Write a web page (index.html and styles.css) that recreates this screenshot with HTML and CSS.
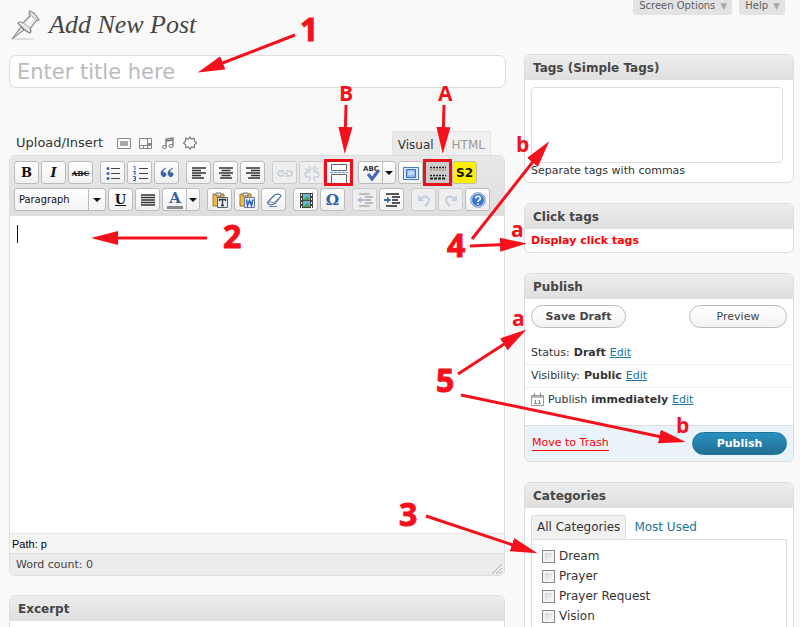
FILE: index.html
```html
<!DOCTYPE html>
<html lang="en">
<head>
<meta charset="utf-8">
<title>Add New Post</title>
<link rel="stylesheet" href="styles.css">
</head>
<body>
<div class="page">
  <header class="top">
    <h1 class="heading">
      <svg class="pin" viewBox="0 0 32 32" aria-hidden="true">
        <ellipse cx="14" cy="30" rx="12" ry="1" fill="#ddd"/>
        <path d="M3 30 12 18l3 3z" fill="#ddd" stroke="#777"/>
        <path d="M21 2q4 1 9 9l-3 1-6 8q2 2 0 4-4-1-12-10 2-2 5 0l7-7q-2-3 0-5z" fill="#eee" stroke="#888" stroke-width="1.2"/>
        <path d="M21 4q2 4 7 7M14 13q2 4 7 6" fill="none" stroke="#aaa"/>
        <path d="m17 14 5-6 2 2-5 6z" fill="#fff"/>
      </svg>
      Add New Post
    </h1>
    <nav class="screen-tabs">
      <button type="button">Screen Options <span>▼</span></button>
      <button type="button">Help <span>▼</span></button>
    </nav>
  </header>
  <main class="columns">
    <section class="main-col">
      <input class="title" type="text" placeholder="Enter title here" aria-label="Title">
      <div class="media-row">
        <span class="media-label">Upload/Insert</span>
        <button type="button" class="media" aria-label="Add an image"><svg viewBox="0 0 14 12"><path d="M.5 1.500h13v10H.5z" fill="#fff" stroke="#888"/><path d="M3 4h8v5H3z" fill="#aaa"/></svg></button>
        <button type="button" class="media" aria-label="Add video"><svg viewBox="0 0 14 12"><path d="M.5 1.500h12v10H.5zM.5 8.500h12M4.500 8v3M8.500 2v9" fill="none" stroke="#888"/><path d="M9 6h3v3H9z" fill="#888"/></svg></button>
        <button type="button" class="media" aria-label="Add audio"><svg viewBox="0 0 14 12"><path d="M5 10V2l7-1v8M5 4l7-1" fill="none" stroke="#777" stroke-width="1.300"/><ellipse cx="3.500" cy="10" rx="2" ry="1.500" fill="#fff" stroke="#777"/><ellipse cx="10" cy="9" rx="2" ry="1.500" fill="#fff" stroke="#777"/></svg></button>
        <button type="button" class="media" aria-label="Add media"><svg viewBox="0 0 14 14"><path d="M7 1l1.500 2 2.700-.700.200 2.600L13.500 7l-2.100 1.700-.200 2.800-2.700-.600L7 13l-1.500-2.100-2.700.600-.200-2.800L.5 7l2.100-2.100.200-2.600L5.500 3z" fill="#fff" stroke="#777" stroke-width="1.200"/></svg></button>
        <div class="mode-tabs">
          <button type="button" class="mode on">Visual</button><button type="button" class="mode">HTML</button>
        </div>
      </div>
      <div class="editor">
        <div class="toolbar">
          <div class="tools">
            <div class="group">
              <button type="button" class="tool serif"><b>B</b></button>
              <button type="button" class="tool serif"><b><i>I</i></b></button>
              <button type="button" class="tool strike"><s>ABC</s></button>
            </div>
            <div class="group">
              <button type="button" class="tool" aria-label="Bulleted list"><svg viewBox="0 0 16 16"><path d="M6 3.500h9M6 8.500h9M6 13.500h9" stroke="#444"/><g fill="#3a62b0"><circle cx="3" cy="3.500" r="1.500"/><circle cx="3" cy="8.500" r="1.500"/><circle cx="3" cy="13.500" r="1.500"/></g></svg></button>
              <button type="button" class="tool" aria-label="Numbered list"><svg viewBox="0 0 16 16"><path d="M7 3.500h9M7 8.500h9M7 13.500h9" stroke="#444"/><path d="M1.500 1.500H3V5M1 6.500h2.500L2 9h2M1 11.500h2.500v4H1M2 13.500h1" fill="none" stroke="#3a62d0"/></svg></button>
              <button type="button" class="tool" aria-label="Blockquote"><svg viewBox="0 0 16 16"><path d="M7 3Q3 5 4 7.500q4-.5 3 3Q5 13 3 11-.5 6 7 3zm7 0q-4 2-3 4.500 4-.5 3 3Q12 13 10 11q-3.500-5 4-8z" fill="#3a62a8" stroke="#3a62a8" stroke-width=".6"/></svg></button>
            </div>
            <div class="group">
              <button type="button" class="tool" aria-label="Align left"><svg viewBox="0 0 16 16"><path d="M1 3h14M1 5.500h9M1 8h14M1 10.500h9M1 13h12" stroke="#333" stroke-width="1.400"/></svg></button>
              <button type="button" class="tool" aria-label="Align center"><svg viewBox="0 0 16 16"><path d="M1 3h14M3.500 5.500h9M1 8h14M3.500 10.500h9M2 13h12" stroke="#333" stroke-width="1.400"/></svg></button>
              <button type="button" class="tool" aria-label="Align right"><svg viewBox="0 0 16 16"><path d="M1 3h14M6 5.500h9M1 8h14M6 10.500h9M3 13h12" stroke="#333" stroke-width="1.400"/></svg></button>
            </div>
            <div class="group">
              <button type="button" class="tool faded" aria-label="Link"><svg viewBox="0 0 16 16"><path d="M7 6H3.500a2.500 2.500 0 0 0 0 5H7M9 6h3.500a2.500 2.500 0 0 1 0 5H9M5 8.500h6" fill="none" stroke="#7f96bd" stroke-width="1.600"/></svg></button>
              <button type="button" class="tool faded" aria-label="Unlink"><svg viewBox="0 0 16 16"><path d="M6 7H3.500a2.500 2.500 0 0 0 0 5H6M10 7h2.500a2.500 2.500 0 0 1 0 5H10M5 1l2 4M11 1 9 5M14 3l-4 3M5 16l2-4M11 16l-2-4M2 4l4 2" fill="none" stroke="#7f96bd" stroke-width="1.400"/></svg></button>
              <button type="button" class="tool marked" aria-label="Insert more tag"><svg viewBox="0 0 18 20"><path d="M1.500 1.500h15v6h-15zM1.500 20v-8.500h15V20" fill="#fff" stroke="#666"/><path d="M0 9.500h18" stroke="#5a94d0" stroke-dasharray="3 1"/></svg></button>
            </div>
            <div class="group">
              <button type="button" class="tool split" aria-label="Check spelling"><svg viewBox="0 0 18 18"><text x="0" y="7" font-family="DejaVu Sans" font-weight="bold" font-size="7" fill="#333">ABC</text><path d="m5 10 4 5 7-9" fill="none" stroke="#4468b8" stroke-width="3"/></svg><span class="drop"></span></button>
              <button type="button" class="tool" aria-label="Full screen"><svg viewBox="0 0 16 16"><path d="M.5 2.500h15v12H.5z" fill="#dce9fa" stroke="#4b79bd"/><path d="M3.500 4.500h9v8h-9z" fill="#8fb8ee" stroke="#3b70c2"/><path d="M5 7h6M5 9h6" stroke="#f4f8ff"/></svg></button>
              <button type="button" class="tool marked pressed" aria-label="Show kitchen sink"><svg viewBox="0 0 18 20"><path d="M1 4.500h16M1 12.500h16" stroke="#222" stroke-width="1.500" stroke-dasharray="2 1"/><path d="M1 7h16" stroke="#a67b55" stroke-dasharray="2 1"/><path d="M1 15.500h16" stroke="#222" stroke-width="2" stroke-dasharray="3 1"/></svg></button>
              <button type="button" class="tool s2">S2</button>
            </div>
          </div>
          <div class="tools">
            <div class="group">
              <span class="format"><select aria-label="Format"><option>Paragraph</option></select><span class="drop"></span></span>
              <button type="button" class="tool serif"><b><u>U</u></b></button>
              <button type="button" class="tool" aria-label="Justify"><svg viewBox="0 0 16 16"><path d="M1 3h14M1 5.500h14M1 8h14M1 10.500h14M1 13h14" stroke="#333" stroke-width="1.400"/></svg></button>
              <button type="button" class="tool split color"><b>A</b><span class="drop"></span></button>
            </div>
            <div class="group">
              <button type="button" class="tool" aria-label="Paste as plain text"><svg viewBox="0 0 16 16"><path d="M1 2h11v12H1z" fill="#efb93f" stroke="#a47828"/><path d="M4 1h5v3H4z" fill="#ddd" stroke="#777"/><path d="M5.500 5.500h10v10h-10z" fill="#e6edf6" stroke="#566"/><path d="M7.500 9V7.500h6V9M10.500 8v6M9 13.500h3" fill="none" stroke="#334" stroke-width="1.300"/></svg></button>
              <button type="button" class="tool" aria-label="Paste from Word"><svg viewBox="0 0 16 16"><path d="M1 2h11v12H1z" fill="#efb93f" stroke="#a47828"/><path d="M4 1h5v3H4z" fill="#ddd" stroke="#777"/><path d="M5.500 5.500h10v10h-10z" fill="#e6edf6" stroke="#67a"/><path d="m7.500 7.500 1 6 2-5 2 5 1.500-6" fill="none" stroke="#2c5eb0" stroke-width="1.500"/></svg></button>
              <button type="button" class="tool" aria-label="Remove formatting"><svg viewBox="0 0 16 16"><path d="m1.500 10.500 7-7.500q5-2 6.500 1l-6 7.500q-6 3-7.500-1z" fill="#fff" stroke="#456ca8" stroke-width="1.200"/><path d="m2 10 6 .500L15 4M3 14.500h8" fill="none" stroke="#789"/></svg></button>
            </div>
            <div class="group">
              <button type="button" class="tool" aria-label="Insert embedded media"><svg viewBox="0 0 16 16"><path d="M2 1h13v15H2z" fill="#444"/><path d="M5 2h7v6H5zM5 9h7v6H5z" fill="#69b9d4"/><path d="m5 8 4-4 3 4zm0 7 4-4 3 4z" fill="#42a35c"/><path d="M3.500 2v14M13.500 2v14" stroke="#eee" stroke-dasharray="2 2"/></svg></button>
              <button type="button" class="tool omega">Ω</button>
            </div>
            <div class="group">
              <button type="button" class="tool faded" aria-label="Outdent"><svg viewBox="0 0 16 16"><path d="M2 2h11M8 5h8M8 8h6M8 11h8M2 14h11" stroke="#333" stroke-width="1.400"/><path d="M0 8l4-3v2h3v2H4v2z" fill="#3a62b0"/></svg></button>
              <button type="button" class="tool" aria-label="Indent"><svg viewBox="0 0 16 16"><path d="M2 2h13M8 5h8M8 8h6M8 11h8M2 14h11" stroke="#222" stroke-width="1.600"/><path d="M7 8 3 5v2H0v2h3v2z" fill="#3a62b0"/></svg></button>
            </div>
            <div class="group">
              <button type="button" class="tool faded" aria-label="Undo"><svg viewBox="0 0 16 16"><path d="M4 7q6-5 9 0 0 4-4 7" fill="none" stroke="#6c92cf" stroke-width="2"/><path d="M2 3v6h6z" fill="#6c92cf"/></svg></button>
              <button type="button" class="tool faded" aria-label="Redo"><svg viewBox="0 0 16 16"><path d="M12 7q-6-5-9 0 0 4 4 7" fill="none" stroke="#6c92cf" stroke-width="2"/><path d="M14 3v6H8z" fill="#6c92cf"/></svg></button>
              <button type="button" class="tool" aria-label="Help"><svg viewBox="0 0 16 16"><circle cx="8" cy="8" r="6.500" fill="#3d75cc" stroke="#d2e0f5"/><circle cx="8" cy="8" r="7.300" fill="none" stroke="#4a78bd" stroke-width=".8"/><path d="M5.500 6.500Q6 4 8.500 4.300T10 7.500Q8 8 8 10M8 11.200v1.600" fill="none" stroke="#fff" stroke-width="1.600"/></svg></button>
            </div>
          </div>
        </div>
        <div class="writing"><textarea aria-label="Post content"></textarea></div>
        <div class="path">Path: p</div>
        <div class="count">Word count: 0
          <svg class="grip" viewBox="0 0 12 12" aria-hidden="true"><path d="M1 11 11 1M5 11l6-6M8.500 11 11 8.500" stroke="#aaa"/></svg>
        </div>
      </div>
      <section class="box excerpt"><h2>Excerpt</h2><div class="box-body"></div></section>
    </section>

    <aside class="side-col">
      <section class="box">
        <h2>Tags (Simple Tags)</h2>
        <div class="box-body tags">
          <textarea id="tags"></textarea>
          <label for="tags">Separate tags with commas</label>
        </div>
      </section>
      <section class="box">
        <h2>Click tags</h2>
        <div class="box-body click"><a href="#">Display click tags</a></div>
      </section>
      <section class="box">
        <h2>Publish</h2>
        <div class="box-body publish">
          <div class="draft-row"><button type="button" class="pill save">Save Draft</button><button type="button" class="pill">Preview</button></div>
          <p>Status: <b>Draft</b> <a href="#">Edit</a></p>
          <p>Visibility: <b>Public</b> <a href="#">Edit</a></p>
          <p><svg class="cal" viewBox="0 0 13 13" aria-hidden="true"><path d="M.5 2.500h12v10H.5z" fill="#fff" stroke="#999"/><path d="M1 3h11v2H1z" fill="#bbb"/><path d="M3.500 0v4M9.500 0v4M4.500 7v4M8.500 7v4M3.500 7.500h1M7.500 7.500h1M3 10.500h3M7 10.500h3" stroke="#888"/></svg>Publish <b>immediately</b> <a href="#">Edit</a></p>
          <footer class="actions"><a href="#">Move to Trash</a><button type="submit" class="primary">Publish</button></footer>
        </div>
      </section>
      <section class="box cats">
        <h2>Categories</h2>
        <div class="box-body">
          <div class="cat-tabs"><a class="on" href="#">All Categories</a><a href="#">Most Used</a></div>
          <div class="cat-list">
            <label><input type="checkbox">Dream</label>
            <label><input type="checkbox">Prayer</label>
            <label><input type="checkbox">Prayer Request</label>
            <label><input type="checkbox">Vision</label>
          </div>
        </div>
      </section>
    </aside>
  </main>

  <svg class="notes" width="800" height="627" viewBox="0 0 800 627">
    <defs><marker id="head" markerUnits="userSpaceOnUse" markerWidth="28" markerHeight="16" refX="17" refY="8" orient="auto"><path d="M0 1 27 8 0 15z"/></marker></defs>
    <g class="arrows">
      <path d="M295 35 207 69"/><path d="M346 105 345 144"/><path d="M444 105 443 144"/><path d="M207 238H101"/>
      <path d="M472 239 543 149"/><path d="M470 246 517 244"/><path d="M458 374 518 335"/><path d="M461 395 676 440"/><path d="M426 516 528 550"/>
    </g>
    <g class="numbers">
      <text x="300" y="41">1</text><text x="223" y="248">2</text><text x="399" y="526">3</text><text x="447" y="257">4</text><text x="436" y="392">5</text>
    </g>
    <g class="letters">
      <text x="339" y="101">B</text><text x="438" y="101">A</text><text x="516" y="152">b</text><text x="511" y="237">a</text><text x="512" y="326">a</text><text x="676" y="433">b</text>
    </g>
  </svg>
</div>
</body>
</html>
```
FILE: styles.css
```css
* { box-sizing: border-box; }
html { overflow: hidden; }
body { margin: 0; background: #f9f9f9; color: #333; font: 11px/16px "DejaVu Sans", Verdana, sans-serif; }
button, input, select, textarea { font: inherit; color: inherit; margin: 0; padding: 0; }
button { display: flex; align-items: center; justify-content: center; }
h1, h2, p { margin: 0; }
a { color: #21759b; }
.page { position: relative; height: 100vh; overflow: hidden; }
.top { display: flex; justify-content: space-between; align-items: flex-start; height: 54px; padding: 0 15px 0 9px; }
.heading { display: flex; align-items: center; gap: 8px; padding-top: 9px; color: #464646; font: italic 26px/32px "Liberation Serif", Georgia, serif; }
.pin { width: 32px; height: 32px; }
.screen-tabs { display: flex; gap: 7px; }
.screen-tabs button { height: 15px; padding: 0 5px 4px 6px; border: 0; border-radius: 0 0 3px 3px; background: #e3e3e3; color: #606060; font-size: 10px; line-height: 12px; gap: 5px; }
.screen-tabs span { color: #aaa; font-size: 9px; }
.columns { display: grid; grid-template-columns: minmax(0, 1fr) 270px; gap: 18px; padding: 0 6px 0 9px; align-items: start; }
.title { display: block; width: 100%; height: 33px; padding: 0 7px; border: 1px solid #ddd; border-radius: 7px; background: #fff; font-size: 21px; margin-top: 1px; }
.title::placeholder { color: #bbb; opacity: 1; }
.media-row { display: flex; align-items: center; height: 24px; margin-top: 43px; padding: 0 15px 0 7px; gap: 8px; }
.media-label { font-size: 13px; margin-right: 6px; }
.media { width: 14px; height: 14px; border: 0; background: none; }
.media svg { width: 14px; height: 14px; }
.mode-tabs { display: flex; gap: 6px; align-self: stretch; margin-left: auto; }
.mode { padding: 3px 5px 0; border: 1px solid #e3e3e3; border-bottom: 0; border-radius: 3px 3px 0 0; background: #f1f1f1; color: #999; font-size: 12px; }
.mode.on { background: #e9e9e9; color: #333; }
.editor { margin-right: 1px; border: 1px solid #ddd; border-radius: 6px; background: #fff; overflow: hidden; }
.toolbar { display: grid; gap: 4px; padding: 5px 4px; background: linear-gradient(#e8e8e8, #dedede); }
.tools { display: flex; gap: 7px; height: 23px; }
.group { display: flex; gap: 2px; }
.tool { width: 25px; height: 23px; border: 1px solid #bbb; border-radius: 3px; background: linear-gradient(#fff, #f0f0f0); color: #111; }
.tool svg { width: 16px; height: 16px; flex: none; }
.serif { font: 13px/16px "DejaVu Serif", serif; }
.strike { font: bold 8px/12px "DejaVu Serif Condensed", "DejaVu Serif", serif; }
.faded { background: #eee; border-color: #ccc; }
.faded svg { opacity: .35; }
.marked { outline: 3px solid #e9111c; outline-offset: -1px; border: 0; border-radius: 0; }
.marked svg { width: 18px; height: 20px; }
.pressed { background: #ccc; }
.s2 { background: #ffee00; font-weight: bold; font-size: 12px; }
.split { width: 38px; justify-content: space-between; padding-left: 4px; }
.split svg { width: 18px; height: 18px; }
.drop { display: flex; align-items: center; justify-content: center; width: 13px; height: 100%; border-left: 1px solid #bbb; }
.drop::before { content: ""; border: 4px solid transparent; border-top-color: #111; border-bottom: 0; }
.color b { width: 16px; color: #3b5f9c; font: bold 15px/15px "DejaVu Serif", serif; border-bottom: 3px solid #888; }
.omega { color: #2c5cae; font: bold 15px/16px "DejaVu Serif", serif; }
.format { display: flex; width: 92px; height: 23px; border: 1px solid #bbb; border-radius: 3px; background: linear-gradient(#fff, #f4f4f4); }
.format select { flex: 1; min-width: 0; padding-left: 4px; border: 0; background: none; appearance: none; color: #111; font: 11px/16px "DejaVu Sans Condensed", sans-serif; }
.format .drop { width: 17px; }
.writing { position: relative; height: 317px; }
.writing textarea { display: block; width: 100%; height: 100%; padding: 10px; border: 0; resize: none; outline: 0; }
.writing::before { content: ""; position: absolute; left: 7px; top: 9px; width: 1px; height: 18px; background: #111; }
.path { height: 20px; padding: 2px; border-top: 1px solid #e6e6e6; background: #f5f5f5; color: #000; font: 11px/17px "Liberation Sans", sans-serif; }
.count { display: flex; justify-content: space-between; align-items: center; height: 22px; padding: 1px 1px 0 6px; border-top: 1px solid #ddd; background: #ececec; font-size: 11px; color: #444; }
.grip { width: 12px; height: 12px; align-self: flex-end; }
.box { border: 1px solid #ddd; border-radius: 6px; background: #fff; overflow: hidden; }
.box h2 { height: 25px; padding: 0 8px; background: linear-gradient(#ededed, #dfdfdf); color: #464646; font: bold 12px/26px "DejaVu Sans", sans-serif; }
.excerpt { margin: 19px 1px 0 0; min-height: 80px; }
.side-col { display: grid; gap: 20px; }
.tags { padding: 7px 10px 3px 6px; }
.tags textarea { display: block; width: 100%; height: 76px; border: 1px solid #ddd; border-radius: 4px; resize: none; }
.tags label { display: block; }
.click { padding: 4px 6px 3px; }
.click a { color: #f00; font-weight: bold; text-decoration: none; }
.draft-row { display: flex; justify-content: space-between; padding: 6px 6px 14px; }
.pill { width: 98px; height: 23px; border: 1px solid #bbb; border-radius: 12px; background: linear-gradient(#fff, #f2f2f2); color: #464646; }
.save { width: 95px; font-weight: bold; }
.publish p { display: flex; align-items: center; gap: 4px; height: 23px; padding: 0 6px; border-bottom: 1px solid #eee; }
.publish p:nth-of-type(3) { border: 0; height: 37px; padding-bottom: 14px; }
.cal { width: 13px; height: 13px; }
.actions { display: flex; align-items: center; justify-content: space-between; height: 36px; padding: 0 6px 0 7px; border-top: 1px solid #ddd; background: #eaf2fa; }
.actions a { color: #f00; text-decoration: none; border-bottom: 1px solid #f00; line-height: 14px; }
.primary { width: 95px; height: 23px; border: 1px solid #21759b; border-radius: 12px; background: linear-gradient(#2a90bf, #216f95); color: #fff; font-weight: bold; }
.cats .box-body { padding: 7px 6px; }
.cat-tabs { display: flex; font-size: 12px; line-height: 23px; }
.cat-tabs a { padding: 0 8px; border-top: 1px solid transparent; text-decoration: none; }
.cat-tabs .on { padding: 0 5px; border: 1px solid #ddd; border-bottom: 0; border-radius: 3px 3px 0 0; background: #f1f1f1; color: #333; }
.cat-list { display: grid; gap: 4px; padding: 8px 10px; border: 1px solid #ddd; height: 180px; align-content: start; }
.cat-list label { display: flex; align-items: center; gap: 4px; font-size: 12px; }
.cat-list input { appearance: none; width: 13px; height: 13px; border: 1px solid #888; background: linear-gradient(135deg, #ccc, #fff); box-shadow: inset 0 0 0 2px #f4f4f4; }
.notes { position: absolute; top: 0; left: 0; pointer-events: none; }
.arrows path { stroke: #f5111c; stroke-width: 3; fill: none; marker-end: url(#head); }
#head path { fill: #f5111c; stroke: none; }
.numbers { fill: #f5111c; stroke: #f5111c; stroke-width: 1px; font: bold 32px "Open Sans", sans-serif; }
.letters { fill: #f5111c; font: bold 21px "Open Sans", sans-serif; }
```
